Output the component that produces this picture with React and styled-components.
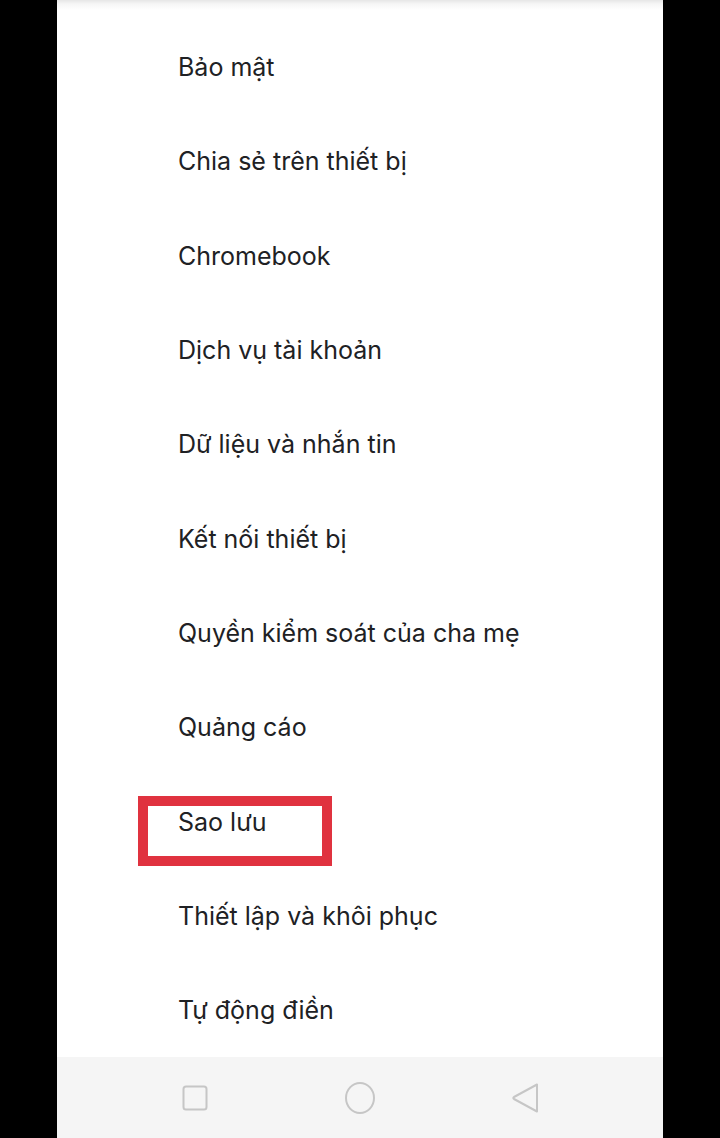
import React from "react";
import styled, { createGlobalStyle } from "styled-components";

const GlobalStyle = createGlobalStyle`
  html, body {
    margin: 0;
    padding: 0;
    background: #000;
  }
  body {
    font-family: Inter, "Open Sans", sans-serif;
  }
`;

const Screen = styled.div`
  width: 720px;
  height: 1138px;
  background: #000;
  display: flex;
  justify-content: center;
`;

const Phone = styled.div`
  width: 606px;
  height: 1138px;
  background: #fff;
  display: flex;
  flex-direction: column;
`;

const TopShade = styled.div`
  height: 20px;
  flex-shrink: 0;
  background: linear-gradient(to bottom, #e6e6e6 0px, #f6f6f6 4px, #fff 10px);
`;

const List = styled.ul`
  list-style: none;
  margin: 0;
  padding: 0;
  flex: 1;
`;

const Row = styled.li`
  position: relative;
  height: 94.3px;
  display: flex;
  align-items: center;
  padding-left: 121px;
  font-size: 25px;
  color: #202124;
`;

const Highlight = styled.span`
  position: absolute;
  left: 81px;
  top: 22px;
  width: 174px;
  height: 50px;
  border: 10px solid #e0323f;
  pointer-events: none;
`;

const NavBar = styled.nav`
  height: 81px;
  flex-shrink: 0;
  background: #f5f5f5;
  display: flex;
  align-items: center;
  justify-content: center;
  gap: 133px;
`;

const NavIcon = styled.svg`
  width: 32px;
  height: 32px;
  fill: none;
  stroke: #c6c6c6;
  stroke-width: 2;
  stroke-linejoin: round;
`;

const items = [
  "Bảo mật",
  "Chia sẻ trên thiết bị",
  "Chromebook",
  "Dịch vụ tài khoản",
  "Dữ liệu và nhắn tin",
  "Kết nối thiết bị",
  "Quyền kiểm soát của cha mẹ",
  "Quảng cáo",
  "Sao lưu",
  "Thiết lập và khôi phục",
  "Tự động điền",
];

const App = () => (
  <>
    <GlobalStyle />
    <Screen>
      <Phone>
        <TopShade />
        <List>
          {items.map((label) => (
            <Row key={label}>
              {label}
              {label === "Sao lưu" && <Highlight />}
            </Row>
          ))}
        </List>
        <NavBar>
          <NavIcon viewBox="0 0 32 32">
            <rect x="4.5" y="4.5" width="23" height="23" rx="2.5" />
          </NavIcon>
          <NavIcon viewBox="0 0 32 32">
            <ellipse cx="16" cy="16" rx="14" ry="15" />
          </NavIcon>
          <NavIcon viewBox="0 0 32 32">
            <path d="M28 2.5 L28 29.5 L5 17 Q3.6 16 5 15 Z" />
          </NavIcon>
        </NavBar>
      </Phone>
    </Screen>
  </>
);

export default App;
